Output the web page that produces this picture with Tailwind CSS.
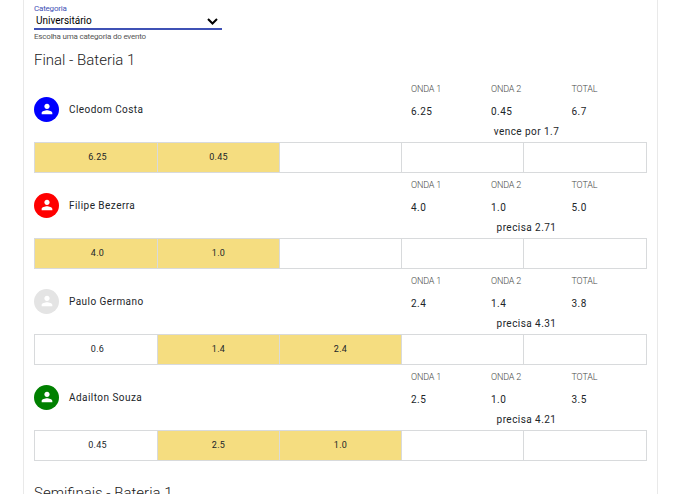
<!DOCTYPE html>
<html lang="pt-BR">
<head>
    <meta charset="UTF-8">
    <meta name="viewport" content="width=device-width, initial-scale=1.0">
    <title>Baterias</title>
    <script src="https://cdn.jsdelivr.net/npm/@tailwindcss/browser@4"></script>
</head>
<body class="bg-white font-[Roboto,sans-serif] text-[#212529] h-screen overflow-hidden">
    <main class="ml-[23px] h-screen w-[635px] overflow-hidden border-x border-[#e9e9e9] px-[10px]">
        <div class="w-[188px] pt-[3px]">
            <label for="categoria" class="block h-[10px] text-[8px] leading-[11px] tracking-[-0.2px] text-[#3f51b5]">Categoria</label>
            <div class="flex h-[17px] items-center justify-between border-b-2 border-[#3f51b5] pl-[2px] pr-1">
                <span id="categoria" class="text-[10px] leading-[15px] text-black">Universitário</span>
                <svg class="mt-px h-[7px] w-[11px]" viewBox="0 0 11 7" fill="none" stroke="#000" stroke-width="2"><path d="M1 1l4.5 4.5L10 1"/></svg>
            </div>
            <p class="whitespace-nowrap text-[8px] leading-[13px] tracking-[-0.2px] text-[#555]">Escolha uma categoria do evento</p>
        </div>

        <h2 class="mt-[6px] h-[28px] text-[15px] leading-[23px] font-light text-[#212121]">Final - Bateria 1</h2>

        <div id="heat"></div>

        <h2 class="mt-[21px] text-[15px] leading-[23px] font-light text-[#212121]">Semifinais - Bateria 1</h2>
    </main>

    <script>
        const surfers = [
            { name: 'Cleodom Costa', color: '#0000ff', best: ['6.25', '0.45', '6.7'], note: 'vence por 1.7', waves: ['6.25', '0.45', '', '', ''], counted: [0, 1] },
            { name: 'Filipe Bezerra', color: '#ff0000', best: ['4.0', '1.0', '5.0'], note: 'precisa 2.71', waves: ['4.0', '1.0', '', '', ''], counted: [0, 1] },
            { name: 'Paulo Germano', color: '#e4e4e4', best: ['2.4', '1.4', '3.8'], note: 'precisa 4.31', waves: ['0.6', '1.4', '2.4', '', ''], counted: [1, 2] },
            { name: 'Adailton Souza', color: '#008000', best: ['2.5', '1.0', '3.5'], note: 'precisa 4.21', waves: ['0.45', '2.5', '1.0', '', ''], counted: [1, 2] }
        ];
        const labels = ['ONDA 1', 'ONDA 2', 'TOTAL'];

        document.getElementById('heat').innerHTML = surfers.map(surfer => `
            <section class="h-[96px]">
                <div class="flex h-[65px]">
                    <div class="flex h-[65px] w-[377px] items-center gap-[10px]">
                        <div class="flex size-[25px] items-center justify-center rounded-full" style="background-color: ${surfer.color}">
                            <svg class="mb-px size-[16px]" viewBox="0 0 24 24" fill="#fff"><path d="M12 12c2.21 0 4-1.79 4-4s-1.79-4-4-4-4 1.79-4 4 1.79 4 4 4zm0 2c-2.67 0-8 1.34-8 4v2h16v-2c0-2.66-5.33-4-8-4z"/></svg>
                        </div>
                        <span class="text-[10px] tracking-[0.45px]">${surfer.name}</span>
                    </div>
                    <div class="w-[236px]">
                        <div class="grid grid-cols-[80px_80.5px_60px]">
                            ${labels.map((label, i) => `
                                <div>
                                    <p class="pt-[5px] text-[9px] leading-[14px] font-light tracking-[-0.15px] text-[#4a4a4a]">${label}</p>
                                    <p class="pt-[8px] text-[10px] leading-[15px] tracking-[0.45px]">${surfer.best[i]}</p>
                                </div>
                            `).join('')}
                        </div>
                        <p class="pt-[5px] pr-[5px] text-center text-[10px] leading-[15px] tracking-[0.45px]">${surfer.note}</p>
                    </div>
                </div>
                <div class="grid h-[31px] grid-cols-[123px_122px_122px_122px_123px] border-l border-[#d8dadc]">
                    ${surfer.waves.map((wave, i) => `
                        <div class="flex items-center justify-center border-y border-r border-[#d8dadc] text-[9px] tracking-[0.3px] first:pl-[3px] ${surfer.counted.includes(i) ? 'bg-[#f5dd80]' : ''}">${wave}</div>
                    `).join('')}
                </div>
            </section>
        `).join('');
    </script>
</body>
</html>
